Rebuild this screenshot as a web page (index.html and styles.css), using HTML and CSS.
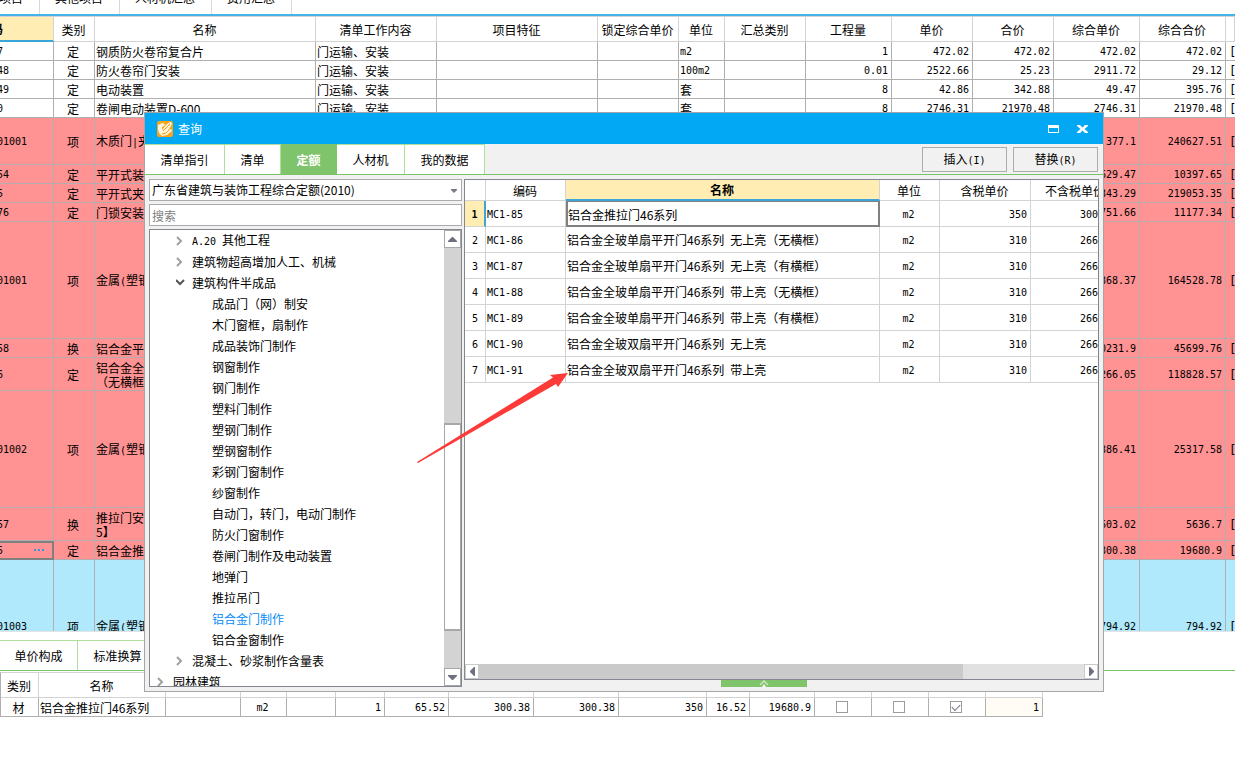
FILE: index.html
```html
<!DOCTYPE html>
<html lang="zh-CN">
<head>
<meta charset="utf-8">
<title>查询</title>
<link rel="stylesheet" href="styles.css">
</head>
<body>
<main class="app">
  <nav class="top-tabs">
    <button>措施项目</button><button>其他项目</button><button>人材机汇总</button><button>费用汇总</button>
  </nav>
  <section class="budget">
    <table class="grid budget-grid">
      <colgroup><col class="w-code"><col class="w-kind"><col><col class="w-work"><col class="w-feature"><col class="w-81"><col class="w-unit"><col class="w-81"><col class="w-86"><col class="w-81"><col class="w-81"><col class="w-86"><col class="w-86"><col class="w-last"></colgroup>
      <thead><tr><th class="current">编码</th><th>类别</th><th>名称</th><th>清单工作内容</th><th>项目特征</th><th>锁定综合单价</th><th>单位</th><th>汇总类别</th><th>工程量</th><th>单价</th><th>合价</th><th>综合单价</th><th>综合合价</th><th></th></tr></thead>
      <tbody>
        <tr class="h-line"><td class="code">7</td><td class="mid">定</td><td>钢质防火卷帘复合片</td><td>门运输、安装</td><td></td><td></td><td class="lat">m2</td><td></td><td class="num">1</td><td class="num">472.02</td><td class="num">472.02</td><td class="num">472.02</td><td class="num">472.02</td><td>[建</td></tr>
        <tr class="h-line"><td class="code">48</td><td class="mid">定</td><td>防火卷帘门安装</td><td>门运输、安装</td><td></td><td></td><td class="lat">100m2</td><td></td><td class="num">0.01</td><td class="num">2522.66</td><td class="num">25.23</td><td class="num">2911.72</td><td class="num">29.12</td><td>[建</td></tr>
        <tr class="h-line"><td class="code">49</td><td class="mid">定</td><td>电动装置</td><td>门运输、安装</td><td></td><td></td><td>套</td><td></td><td class="num">8</td><td class="num">42.86</td><td class="num">342.88</td><td class="num">49.47</td><td class="num">395.76</td><td>[建</td></tr>
        <tr class="h-line"><td class="code">0</td><td class="mid">定</td><td>卷闸电动装置D-600</td><td>门运输、安装</td><td></td><td></td><td>套</td><td></td><td class="num">8</td><td class="num">2746.31</td><td class="num">21970.48</td><td class="num">2746.31</td><td class="num">21970.48</td><td>[建</td></tr>
        <tr class="pink h-item"><td class="code">01001</td><td class="mid">项</td><td>木质门<span class="lat">|</span>夹</td><td></td><td></td><td></td><td></td><td></td><td></td><td></td><td></td><td class="num">377.1</td><td class="num">240627.51</td><td>[建</td></tr>
        <tr class="pink h-line"><td class="code">54</td><td class="mid">定</td><td>平开式装</td><td></td><td></td><td></td><td></td><td></td><td></td><td></td><td></td><td class="num">629.47</td><td class="num">10397.65</td><td>[建</td></tr>
        <tr class="pink h-line"><td class="code">5</td><td class="mid">定</td><td>平开式夹</td><td></td><td></td><td></td><td></td><td></td><td></td><td></td><td></td><td class="num">343.29</td><td class="num">219053.35</td><td>[建</td></tr>
        <tr class="pink h-line"><td class="code">76</td><td class="mid">定</td><td>门锁安装</td><td></td><td></td><td></td><td></td><td></td><td></td><td></td><td></td><td class="num">751.66</td><td class="num">11177.34</td><td>[建</td></tr>
        <tr class="pink h-long"><td class="code">01001</td><td class="mid">项</td><td>金属<span class="lat">(</span>塑钢</td><td></td><td></td><td></td><td></td><td></td><td></td><td></td><td></td><td class="num">368.37</td><td class="num">164528.78</td><td>[建</td></tr>
        <tr class="pink h-line"><td class="code">58</td><td class="mid">换</td><td>铝合金平</td><td></td><td></td><td></td><td></td><td></td><td></td><td></td><td></td><td class="num">0231.9</td><td class="num">45699.76</td><td>[建</td></tr>
        <tr class="pink h-double"><td class="code">6</td><td class="mid">定</td><td>铝合金全<br>（无横框</td><td></td><td></td><td></td><td></td><td></td><td></td><td></td><td></td><td class="num">266.05</td><td class="num">118828.57</td><td>[建</td></tr>
        <tr class="pink h-long"><td class="code">01002</td><td class="mid">项</td><td>金属<span class="lat">(</span>塑钢</td><td></td><td></td><td></td><td></td><td></td><td></td><td></td><td></td><td class="num">386.41</td><td class="num">25317.58</td><td>[建</td></tr>
        <tr class="pink h-double"><td class="code">57</td><td class="mid">换</td><td>推拉门安<br>5】</td><td></td><td></td><td></td><td></td><td></td><td></td><td></td><td></td><td class="num">603.02</td><td class="num">5636.7</td><td>[建</td></tr>
        <tr class="pink h-line"><td class="code editing"><div class="edit"><span>5</span><button class="more" aria-label="更多"><svg width="12" height="3"><path d="M1 0h2v2h-2zM5 0h2v2h-2zM9 0h2v2h-2z" fill="#3a8fe0"/></svg></button></div></td><td class="mid">定</td><td>铝合金推</td><td></td><td></td><td></td><td></td><td></td><td></td><td></td><td></td><td class="num">300.38</td><td class="num">19680.9</td><td>[建</td></tr>
        <tr class="blue h-last"><td class="code">01003</td><td class="mid">项</td><td>金属<span class="lat">(</span>塑钢</td><td></td><td></td><td></td><td></td><td></td><td></td><td></td><td></td><td class="num">794.92</td><td class="num">794.92</td><td>[建</td></tr>
      </tbody>
    </table>
  </section>
  <section class="detail">
    <nav class="detail-tabs"><button>单价构成</button><button>标准换算</button></nav>
    <table class="grid detail-grid">
      <colgroup><col style="width:38px"><col style="width:127px"><col style="width:75px"><col style="width:46px"><col style="width:49px"><col style="width:49px"><col style="width:64px"><col style="width:85px"><col style="width:85px"><col style="width:88px"><col style="width:43px"><col style="width:65px"><col style="width:57px"><col style="width:57px"><col style="width:57px"><col style="width:57px"></colgroup>
      <thead><tr><th>类别</th><th>名称</th><th></th><th></th><th></th><th></th><th></th><th></th><th></th><th></th><th></th><th></th><th></th><th></th><th></th><th></th></tr></thead>
      <tbody><tr class="h-line"><td class="mid">材</td><td>铝合金推拉门46系列</td><td></td><td class="mid lat">m2</td><td></td><td class="num">1</td><td class="num">65.52</td><td class="num">300.38</td><td class="num">300.38</td><td class="num">350</td><td class="num">16.52</td><td class="num">19680.9</td><td class="check"><input type="checkbox" aria-label="选项一"></td><td class="check"><input type="checkbox" aria-label="选项二"></td><td class="check"><input type="checkbox" aria-label="选项三" checked></td><td class="num cream">1</td></tr></tbody>
    </table>
  </section>

  <section class="dialog" role="dialog" aria-label="查询">
    <header class="titlebar">
      <svg class="logo" width="16" height="16" viewBox="0 0 16 16"><rect width="16" height="16" rx="2" fill="#f9a51a"/><path d="M1 4l4-2 3 1-1 2-2 1v3l4-5 4-3 2 1-1 3-3 4 3-1 1 2-5 4-5 1-3-3-1-4z" fill="#fff3dc"/><path d="M6 10l7-7M5 13l4-1 3-3" fill="none" stroke="#f39a12" stroke-width="1"/></svg>
      <h1>查询</h1>
      <button class="win" aria-label="最大化"><svg width="11" height="8"><path d="M0 0h11v8H0zM1 3v4h9V3z" fill="#fff" fill-rule="evenodd"/></svg></button>
      <button class="win" aria-label="关闭"><svg width="11" height="8"><path d="M0 0h3l2.500 2.500L8 0h3v1L7.500 4 11 7v1H8L5.500 5.500 3 8H0V7l3.500-3L0 1z" fill="#fff"/></svg></button>
    </header>
    <div class="toolbar">
      <nav class="dialog-tabs"><button class="w-80">清单指引</button><button class="w-56">清单</button><button class="w-56 active">定额</button><button class="w-68">人材机</button><button class="w-80">我的数据</button></nav>
      <div class="actions"><button>插入<span class="lat">(I)</span></button><button>替换<span class="lat">(R)</span></button></div>
    </div>
    <div class="panes">
      <aside class="side">
        <div class="combo">
          <select aria-label="定额库"><option>广东省建筑与装饰工程综合定额(2010)</option></select>
          <svg width="6" height="4"><path d="M0 0h6v1l-3 3-3-3z" fill="#777984"/></svg>
        </div>
        <input class="search" type="text" placeholder="搜索" aria-label="搜索">
        <div class="tree-box">
          <ul class="tree">
            <li class="l2"><svg width="8" height="10"><path d="M1 1l4 4-4 4" /></svg><span><span class="lat">A.20 </span>其他工程</span></li>
            <li class="l2"><svg width="8" height="10"><path d="M1 1l4 4-4 4" /></svg>建筑物超高增加人工、机械</li>
            <li class="l2 open"><svg width="10" height="8"><path d="M0 1l4 4 4-4" /></svg>建筑构件半成品</li>
            <li class="l3">成品门（网）制安</li>
            <li class="l3">木门窗框，扇制作</li>
            <li class="l3">成品装饰门制作</li>
            <li class="l3">钢窗制作</li>
            <li class="l3">钢门制作</li>
            <li class="l3">塑料门制作</li>
            <li class="l3">塑钢门制作</li>
            <li class="l3">塑钢窗制作</li>
            <li class="l3">彩钢门窗制作</li>
            <li class="l3">纱窗制作</li>
            <li class="l3">自动门，转门，电动门制作</li>
            <li class="l3">防火门窗制作</li>
            <li class="l3">卷闸门制作及电动装置</li>
            <li class="l3">地弹门</li>
            <li class="l3">推拉吊门</li>
            <li class="l3 selected">铝合金门制作</li>
            <li class="l3">铝合金窗制作</li>
            <li class="l2"><svg width="8" height="10"><path d="M1 1l4 4-4 4" /></svg>混凝土、砂浆制作含量表</li>
            <li class="l1"><svg width="8" height="10"><path d="M1 1l4 4-4 4" /></svg>园林建筑</li>
          </ul>
          <div class="vbar">
            <button aria-label="向上滚动"><svg width="9" height="5"><path d="M4 0h1l4 4v1H0V4z" fill="#6e7080"/></svg></button>
            <div class="vtrack"><div class="vthumb"></div></div>
            <button aria-label="向下滚动"><svg width="9" height="5"><path d="M0 0h9v1L5 5H4L0 1z" fill="#6e7080"/></svg></button>
          </div>
        </div>
      </aside>
      <div class="result">
        <div class="result-box">
          <div class="result-scroll">
            <table class="grid result-grid">
              <colgroup><col class="w-index"><col class="w-quota"><col><col class="w-measure"><col class="w-taxed"><col class="w-untaxed"></colgroup>
              <thead><tr><th></th><th>编码</th><th class="current">名称</th><th>单位</th><th>含税单价</th><th class="cut">不含税单价</th></tr></thead>
              <tbody>
                <tr class="picked"><td class="index">1</td><td class="lat">MC1-85</td><td class="focus">铝合金推拉门46系列</td><td class="mid lat">m2</td><td class="num">350</td><td class="num cut">300</td></tr>
                <tr><td class="index">2</td><td class="lat">MC1-86</td><td>铝合金全玻单扇平开门46系列<span class="lat"> </span>无上亮（无横框）</td><td class="mid lat">m2</td><td class="num">310</td><td class="num cut">266</td></tr>
                <tr><td class="index">3</td><td class="lat">MC1-87</td><td>铝合金全玻单扇平开门46系列<span class="lat"> </span>无上亮（有横框）</td><td class="mid lat">m2</td><td class="num">310</td><td class="num cut">266</td></tr>
                <tr><td class="index">4</td><td class="lat">MC1-88</td><td>铝合金全玻单扇平开门46系列<span class="lat"> </span>带上亮（无横框）</td><td class="mid lat">m2</td><td class="num">310</td><td class="num cut">266</td></tr>
                <tr><td class="index">5</td><td class="lat">MC1-89</td><td>铝合金全玻单扇平开门46系列<span class="lat"> </span>带上亮（有横框）</td><td class="mid lat">m2</td><td class="num">310</td><td class="num cut">266</td></tr>
                <tr><td class="index">6</td><td class="lat">MC1-90</td><td>铝合金全玻双扇平开门46系列<span class="lat"> </span>无上亮</td><td class="mid lat">m2</td><td class="num">310</td><td class="num cut">266</td></tr>
                <tr><td class="index">7</td><td class="lat">MC1-91</td><td>铝合金全玻双扇平开门46系列<span class="lat"> </span>带上亮</td><td class="mid lat">m2</td><td class="num">310</td><td class="num cut">266</td></tr>
              </tbody>
            </table>
          </div>
          <div class="hbar">
            <button aria-label="向左滚动"><svg width="5" height="9"><path d="M5 0v9H4L0 5V4l4-4z" fill="#6e7080"/></svg></button>
            <div class="htrack"><div class="hthumb"></div></div>
            <button aria-label="向右滚动"><svg width="5" height="9"><path d="M0 0v9h1l4-4V4L1 0z" fill="#6e7080"/></svg></button>
          </div>
        </div>
        <button class="expand" aria-label="展开"><svg width="10" height="7"><path d="M1 5l4-4 4 4" fill="none" stroke="#c9e8bf" stroke-width="1.500"/><path d="M3 7l2-3 2 3z" fill="#fff"/></svg></button>
      </div>
    </div>
    <svg class="arrow" width="152" height="92" viewBox="0 0 152 92"><path d="M0 90L136 5.500 133 3 151 1 141 15 139 12 1 91z" fill="#fd3a38"/></svg>
  </section>
</main>
</body>
</html>
```
FILE: styles.css
```css
* { box-sizing: border-box; }
body { margin: 0; background: #fff; color: #000; font: 12px/14px "Noto Sans CJK SC", "Noto Sans", sans-serif; }
button, input, select { margin: 0; padding: 0; border: 0; border-radius: 0; background: none; font: inherit; color: inherit; }
svg { display: block; flex: none; }

.app { position: relative; display: flex; flex-direction: column; height: 100vh; overflow: hidden; }

/* upper tab strip, scrolled partly out of the window */
.top-tabs { display: flex; align-items: flex-end; flex: none; height: 14px; margin-left: -40px; overflow: hidden; }
.top-tabs button { flex: none; height: 30px; padding: 0 16px 2px 15px; border-right: 1px solid #d8d8d8; }

/* shared grid look */
.grid { border-collapse: separate; border-spacing: 0; table-layout: fixed; }
.grid th, .grid td { padding: 2px 3px 0 1px; border: solid #b0b0b0; border-width: 0 1px 1px 0; overflow: hidden; white-space: nowrap; text-align: left; vertical-align: middle; }
.grid th { padding: 1px 1px 0 0; border-color: #d3d3d3; font-weight: 400; text-align: center; }
.grid th.current { background: #ffedb3; border-bottom: 2px solid #3ba5d8; font-weight: 700; }
.grid .mid { text-align: center; }
.grid .num { text-align: right; }
.lat, .num, .code, .index { font-family: "DejaVu Sans Mono", monospace; font-size: 10px; }
.lat { white-space: pre; }

.budget { flex: 1; min-height: 0; overflow: hidden; border-top: 2px solid #42b4e6; border-bottom: 1px solid #e3e3e3; }
.budget-grid { width: calc(100% + 70px); margin-left: -70px; border-top: 1px solid #d3d3d3; }
.budget-grid thead tr { height: 25px; }
.grid td.code { padding-left: 67px; }
.h-line { height: 19px; }
.h-item { height: 47px; }
.h-double { height: 33px; }
.h-long { height: 117px; }
.h-last { height: 132px; }
.w-code { width: 124px; }
.w-kind { width: 41px; }
.w-work { width: 121px; }
.w-feature { width: 161px; }
.w-unit { width: 46px; }
.w-81 { width: 81px; }
.w-86 { width: 86px; }
.w-last { width: 9px; }
.pink { background: #ff9292; }
.blue { background: #afe9fb; }
.pink td { border-color: #b5adad; }
.grid td.editing { padding-top: 0; padding-left: 65px; border: 2px solid #808080; }
.edit { display: flex; justify-content: space-between; align-items: center; }
.more { padding-right: 4px; }
.grid.budget-grid td:last-child { padding-left: 3px; border-right: 0; font-family: "DejaVu Sans Mono", "Noto Sans CJK SC", monospace; }

.detail { flex: none; height: 130px; margin-top: 8px; }
.detail-tabs { display: flex; border-bottom: 1px solid #7cc46a; height: 31px; }
.detail-tabs button { width: 78px; border-top: 1px solid #aee09c; border-right: 1px solid #aee09c; }
.detail-tabs button + button { width: 80px; }
.detail-grid { width: 1043px; margin-top: 1px; border-top: 1px solid #d3d3d3; border-left: 1px solid #b0b0b0; }
.detail-grid thead tr { height: 25px; }
.grid .check { padding-top: 0; }
.cream { background: #fffbf5; }
input[type=checkbox] { appearance: none; display: block; width: 12px; height: 12px; margin: 0 auto; border: 1px solid #9a9aa0; background: #fff; }
input[type=checkbox]:checked::after { content: ""; display: block; width: 7px; height: 4px; margin: 2px 1px; border: solid #6e7080; border-width: 0 0 1px 1px; transform: rotate(-45deg); }

/* query window */
.dialog { position: absolute; top: 112px; right: 131px; bottom: 78px; left: 144px; display: flex; flex-direction: column; border: 1px solid #a5a5a5; background: #f1f1f1; }
.titlebar { display: flex; align-items: center; flex: none; height: 31px; padding: 0 6px 0 12px; background: #02a8f3; color: #fff; }
.titlebar h1 { flex: 1; margin: 0 0 0 5px; font-size: 12px; font-weight: 400; }
.win { display: flex; justify-content: center; width: 29px; padding: 10px 0; }
.toolbar { display: flex; justify-content: space-between; flex: none; height: 31px; border-bottom: 1px solid #7cc46a; }
.dialog-tabs { display: flex; }
.dialog-tabs button { border-top: 1px solid #aee09c; border-right: 1px solid #aee09c; background: #fff; }
.dialog-tabs .active { background: #7fc36a; border-color: #7fc36a; color: #fff; font-weight: 700; }
.w-80 { width: 80px; }
.w-56 { width: 56px; }
.w-68 { width: 68px; }
.actions { display: flex; gap: 6px; padding: 3px 5px 2px 0; }
.actions button { width: 85px; border: 1px solid #adadad; }
.panes { display: flex; flex: 1; min-height: 0; gap: 2px; padding: 4px; }
.side { display: flex; flex-direction: column; flex: none; width: 313px; gap: 3px; }
.combo { position: relative; flex: none; height: 22px; }
.combo select { appearance: none; width: 100%; height: 22px; padding: 0 16px 0 2px; border: 1px solid #ababab; background: #fff; }
.combo svg { position: absolute; right: 5px; top: 10px; pointer-events: none; }
.search { flex: none; height: 22px; padding: 0 2px; border: 1px solid #ababab; background: #fff; }
.search::placeholder { color: #808080; opacity: 1; }
.tree-box { display: flex; flex: 1; min-height: 0; border: 1px solid #828790; background: #fff; }
.tree { flex: 1; margin: 0; padding: 0; overflow: hidden; list-style: none; }
.tree li { display: flex; align-items: center; height: 21px; }
.tree svg { width: 12px; margin-right: 4px; fill: none; stroke: #a0a0a0; stroke-width: 2; }
.tree .open svg { stroke: #555; }
.tree .l1 { padding-left: 7px; }
.tree .l2 { padding-left: 26px; }
.tree .l3 { padding-left: 62px; }
.tree .selected { color: #0a8cf5; }
.vbar { display: flex; flex-direction: column; flex: none; width: 17px; background: #d3d3d3; }
.vbar button { display: flex; align-items: center; justify-content: center; flex: none; height: 18px; border: 1px solid #a8a8a8; background: #fff; }
.vtrack { flex: 1; padding-top: 175px; display: flex; flex-direction: column; }
.vthumb { flex: none; height: 208px; border: 1px solid #a8a8a8; border-width: 2px 1px; background: #fff; }

.result { display: flex; flex-direction: column; flex: 1; min-width: 0; }
.result-box { display: flex; flex-direction: column; flex: 1; min-height: 0; border: 1px solid #828790; background: #fff; }
.result-scroll { flex: 1; min-height: 0; overflow: hidden; }
.result-grid { width: 100%; }
.grid.result-grid td { border-color: #d3d3d3; }
.result-grid thead tr { height: 21px; }
.result-grid tbody tr { height: 26px; }
.w-index { width: 21px; }
.w-quota { width: 80px; }
.w-measure { width: 60px; }
.w-taxed { width: 91px; }
.w-untaxed { width: 67px; }
.grid .index { padding-right: 0; padding-left: 0; text-align: center; }
.grid .picked .index { border-right: 2px solid #3ba5d8; background: #ffedb3; font-weight: 700; }
.grid.result-grid td.focus { padding-left: 0; border: 2px solid #808080; border-top-width: 1px; }
.grid.result-grid .cut { padding-right: 0; border-right: 0; }
.grid th.cut { padding-left: 14px; text-align: left; }
.hbar { display: flex; flex: none; height: 15px; }
.hbar button { display: flex; align-items: center; justify-content: center; width: 14px; border: 1px solid #cacaca; background: #fff; }
.htrack { flex: 1; background: #e1e1e1; }
.hthumb { width: 80%; height: 100%; background: #cacaca; }
.expand { display: flex; justify-content: center; align-self: center; flex: none; width: 86px; height: 7px; margin-right: 36px; background: #7fc36a; }
.arrow { position: absolute; left: 272px; top: 259px; }
```
